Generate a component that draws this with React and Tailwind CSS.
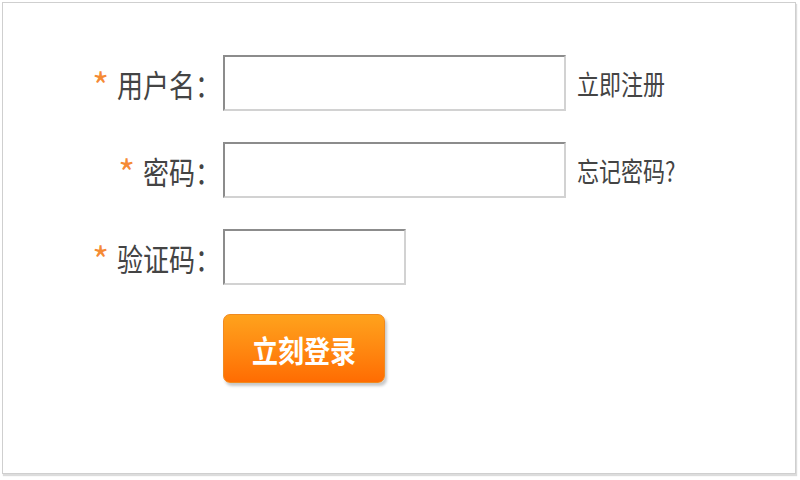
const fontStack = { fontFamily: '"Noto Sans CJK SC", "Noto Sans", sans-serif' };

const Field = ({ label, inputWidth, link }) => (
  <div className="flex items-center h-[56px]">
    <div className="w-[137px] flex justify-end items-center text-[#444]">
      <span className="text-[#f58a34] text-[36px] leading-none mr-[8px] mt-[2px]">*</span>
      <span className="inline-block text-[26px] scale-y-[1.2] mr-[2px]">{label}</span>
    </div>
    <input
      className={`${inputWidth} h-[56px] bg-white border-2 border-t-[#8c8c8c] border-l-[#8c8c8c] border-r-[#d2d2d2] border-b-[#d2d2d2] outline-none`}
    />
    {link && (
      <a className="ml-[11px] inline-block text-[22px] text-[#444] scale-y-[1.25] origin-left">
        {link}
      </a>
    )}
  </div>
);

export default function App() {
  return (
    <div className="w-[800px] h-[480px] bg-white p-[2px]" style={fontStack}>
      <div className="w-[794px] h-[472px] border border-[#cfcfcf] shadow-[1px_2px_1px_#dcdcdc] pl-[83px] pt-[52px] flex flex-col">
        <div className="flex flex-col gap-[31px]">
          <Field label="用户名：" inputWidth="w-[343px]" link="立即注册" />
          <Field label="密码：" inputWidth="w-[343px]" link="忘记密码?" />
          <Field label="验证码：" inputWidth="w-[183px]" />
        </div>
        <div className="pl-[137px] mt-[29px]">
          <button className="w-[162px] h-[69px] rounded-[7px] bg-gradient-to-b from-[#ffa21c] to-[#ff6c02] border border-[#f08a20] text-white font-bold shadow-[2px_3px_3px_#c8c8c8]">
            <span className="inline-block text-[26px] scale-y-[1.15]">立刻登录</span>
          </button>
        </div>
      </div>
    </div>
  );
}
